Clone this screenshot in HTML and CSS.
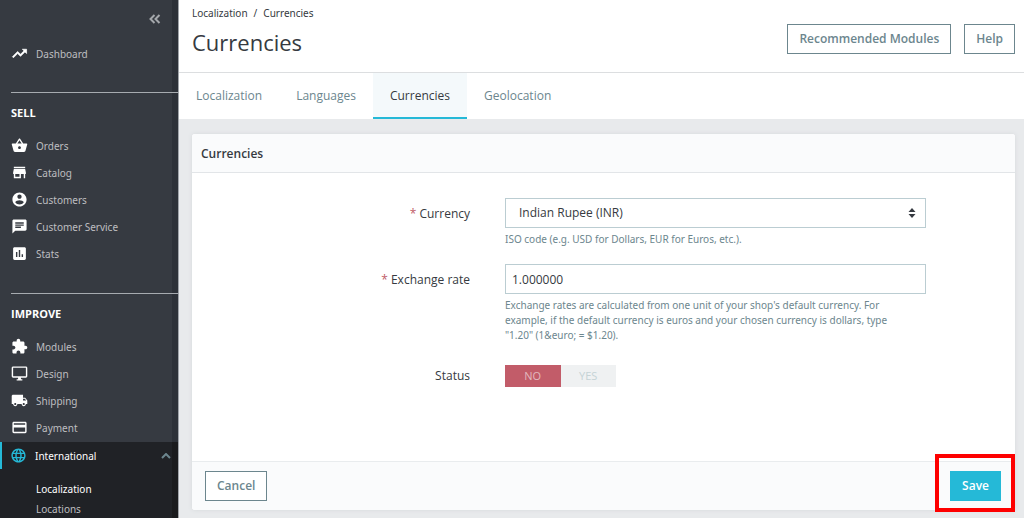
FILE: index.html
```html
<!DOCTYPE html>
<html lang="en">
<head>
<meta charset="utf-8">
<meta name="viewport" content="width=device-width, initial-scale=1">
<title>Currencies</title>
<link rel="stylesheet" href="styles.css">
</head>
<body>
<div class="app">
  <nav class="sidebar" aria-label="Main menu">
    <button class="collapse" type="button" aria-label="Collapse menu">
      <svg viewBox="0 0 12 10" width="12" height="10"><path d="M5.5 1 1.5 5l4 4M10.500 1l-4 4 4 4"/></svg>
    </button>
    <a class="item item-dashboard" href="#"><svg class="icon" viewBox="0 0 24 24"><path d="M16 6l2.290 2.290-4.880 4.880-4-4L2 16.590 3.410 18l6-6 4 4 6.300-6.290L22 12V6z" stroke="#fff"/></svg>Dashboard</a>

    <h2 class="section">Sell</h2>
    <ul class="menu">
      <li><a class="item" href="#"><svg class="icon" viewBox="0 0 24 24"><path d="M17.210 9l-4.380-6.560c-.19-.28-.51-.42-.83-.42-.32 0-.64.14-.83.430L6.790 9H2c-.55 0-1 .45-1 1 0 .09.010.18.040.270l2.540 9.270c.23.840 1 1.460 1.920 1.460h13c.92 0 1.690-.62 1.930-1.460l2.540-9.270L23 10c0-.55-.45-1-1-1h-4.790zM9 9l3-4.400L15 9H9zm3 8c-1.100 0-2-.9-2-2s.9-2 2-2 2 .9 2 2-.9 2-2 2z"/></svg>Orders</a></li>
      <li><a class="item" href="#"><svg class="icon" viewBox="0 0 24 24"><path d="M20 4H4v2h16V4zm1 10v-2l-1-5H4l-1 5v2h1v6h10v-6h4v6h2v-6h1zm-9 4H6v-4h6v4z"/></svg>Catalog</a></li>
      <li><a class="item" href="#"><svg class="icon" viewBox="0 0 24 24"><path d="M12 2C6.480 2 2 6.480 2 12s4.480 10 10 10 10-4.480 10-10S17.520 2 12 2zm0 3c1.660 0 3 1.340 3 3s-1.340 3-3 3-3-1.340-3-3 1.340-3 3-3zm0 14.200c-2.500 0-4.710-1.280-6-3.220.03-1.990 4-3.080 6-3.080 1.990 0 5.970 1.090 6 3.080-1.290 1.940-3.500 3.220-6 3.220z"/></svg>Customers</a></li>
      <li><a class="item" href="#"><svg class="icon" viewBox="0 0 24 24"><path d="M20 2H4c-1.100 0-1.990.9-1.990 2L2 22l4-4h14c1.100 0 2-.9 2-2V4c0-1.100-.9-2-2-2zM6 9h12v2H6V9zm8 5H6v-2h8v2zm4-6H6V6h12v2z"/></svg>Customer Service</a></li>
      <li><a class="item" href="#"><svg class="icon" viewBox="0 0 24 24"><path d="M19 3H5c-1.100 0-2 .9-2 2v14c0 1.100.9 2 2 2h14c1.100 0 2-.9 2-2V5c0-1.100-.9-2-2-2zM9 17H7v-7h2v7zm4 0h-2V7h2v10zm4 0h-2v-4h2v4z"/></svg>Stats</a></li>
    </ul>

    <h2 class="section">Improve</h2>
    <ul class="menu menu-last">
      <li><a class="item" href="#"><svg class="icon" viewBox="0 0 24 24"><path d="M20.500 11H19V7c0-1.100-.9-2-2-2h-4V3.500C13 2.120 11.880 1 10.500 1S8 2.120 8 3.500V5H4c-1.100 0-1.990.9-1.990 2v3.800H3.500c1.490 0 2.700 1.210 2.700 2.700s-1.210 2.700-2.700 2.700H2V20c0 1.100.9 2 2 2h3.800v-1.500c0-1.490 1.210-2.700 2.700-2.700 1.490 0 2.700 1.210 2.700 2.700V22H17c1.100 0 2-.9 2-2v-4h1.500c1.380 0 2.500-1.120 2.500-2.500S21.880 11 20.500 11z"/></svg>Modules</a></li>
      <li><a class="item" href="#"><svg class="icon" viewBox="0 0 24 24"><path d="M21 2H3c-1.100 0-2 .9-2 2v12c0 1.100.9 2 2 2h7v2H8v2h8v-2h-2v-2h7c1.100 0 2-.9 2-2V4c0-1.100-.9-2-2-2zm0 14H3V4h18v12z"/></svg>Design</a></li>
      <li><a class="item" href="#"><svg class="icon" viewBox="0 0 24 24"><path d="M20 8h-3V4H3c-1.100 0-2 .9-2 2v11h2c0 1.660 1.340 3 3 3s3-1.340 3-3h6c0 1.660 1.340 3 3 3s3-1.340 3-3h2v-5l-3-4zM6 18.500c-.83 0-1.500-.67-1.500-1.500s.67-1.500 1.500-1.500 1.500.67 1.500 1.500-.67 1.500-1.500 1.500zm13.500-9l1.960 2.500H17V9.500h2.500zm-1.500 9c-.83 0-1.500-.67-1.500-1.500s.67-1.500 1.500-1.500 1.500.67 1.500 1.500-.67 1.500-1.500 1.500z"/></svg>Shipping</a></li>
      <li><a class="item" href="#"><svg class="icon" viewBox="0 0 24 24"><path d="M20 4H4c-1.110 0-1.990.890-1.990 2L2 18c0 1.110.890 2 2 2h16c1.110 0 2-.89 2-2V6c0-1.110-.89-2-2-2zm0 14H4v-6h16v6zm0-10H4V6h16v2z"/></svg>Payment</a></li>
    </ul>
    <div class="open-group">
      <a class="item item-open" href="#" aria-expanded="true"><svg class="icon" viewBox="0 0 24 24"><path d="M11.990 2C6.470 2 2 6.480 2 12s4.470 10 9.990 10C17.520 22 22 17.520 22 12S17.520 2 11.990 2zm6.930 6h-2.950c-.32-1.250-.78-2.450-1.380-3.560 1.840.63 3.370 1.910 4.330 3.560zM12 4.040c.83 1.200 1.480 2.530 1.910 3.960h-3.820c.43-1.430 1.080-2.760 1.910-3.960zM4.260 14C4.100 13.360 4 12.690 4 12s.1-1.360.26-2h3.380c-.08.66-.14 1.320-.14 2s.06 1.340.14 2H4.260zm.82 2h2.950c.32 1.250.78 2.450 1.380 3.560-1.840-.63-3.370-1.900-4.330-3.560zm2.950-8H5.080c.96-1.660 2.490-2.930 4.330-3.560C8.810 5.550 8.350 6.750 8.030 8zM12 19.960c-.83-1.200-1.480-2.530-1.910-3.960h3.820c-.43 1.430-1.080 2.760-1.910 3.960zM14.340 14H9.660c-.09-.66-.16-1.320-.16-2s.07-1.350.16-2h4.680c.09.65.16 1.320.16 2s-.07 1.340-.16 2zm.25 5.560c.6-1.110 1.060-2.310 1.380-3.560h2.950c-.96 1.650-2.490 2.930-4.330 3.560zM16.360 14c.08-.66.14-1.320.14-2s-.06-1.340-.14-2h3.380c.16.64.26 1.310.26 2s-.1 1.360-.26 2h-3.380z"/></svg>International<svg class="chevron" viewBox="0 0 10 6" width="10" height="6"><path d="M1 5l4-4 4 4"/></svg></a>
      <ul class="submenu">
        <li><a class="current" href="#">Localization</a></li>
        <li><a href="#">Locations</a></li>
      </ul>
    </div>
  </nav>

  <main class="main">
    <header class="page-head">
      <div>
        <nav class="crumbs" aria-label="Breadcrumb"><a href="#">Localization</a><span>/</span><a href="#">Currencies</a></nav>
        <h1 class="title">Currencies</h1>
      </div>
      <div class="actions">
        <button class="btn" type="button">Recommended Modules</button>
        <button class="btn" type="button">Help</button>
      </div>
    </header>
    <nav class="tabs" aria-label="Localization pages">
      <a class="tab" href="#">Localization</a>
      <a class="tab" href="#">Languages</a>
      <a class="tab tab-active" href="#" aria-current="page">Currencies</a>
      <a class="tab" href="#">Geolocation</a>
    </nav>

    <form class="panel">
      <h2 class="panel-head">Currencies</h2>
      <div class="panel-body">
        <div class="row">
          <label class="label" for="currency"><span class="req">*</span> Currency</label>
          <div class="field">
            <div class="select-wrap">
              <select class="control select" id="currency"><option>Indian Rupee (INR)</option></select>
              <svg class="arrows" viewBox="0 0 8 10" width="8" height="10"><path d="M4 0l3.500 4h-7zM4 10L.5 6h7z"/></svg>
            </div>
            <p class="help">ISO code (e.g. USD for Dollars, EUR for Euros, etc.).</p>
          </div>
        </div>
        <div class="row">
          <label class="label" for="rate"><span class="req">*</span> Exchange rate</label>
          <div class="field">
            <input class="control" id="rate" type="text" value="1.000000">
            <p class="help">Exchange rates are calculated from one unit of your shop's default currency. For example, if the default currency is euros and your chosen currency is dollars, type "1.20" (1&amp;euro; = $1.20).</p>
          </div>
        </div>
        <div class="row row-status" role="radiogroup" aria-labelledby="status">
          <span class="label label-status" id="status">Status</span>
          <div class="switch">
            <input type="radio" name="status" id="status-no" checked><label class="no" for="status-no">NO</label>
            <input type="radio" name="status" id="status-yes"><label class="yes" for="status-yes">YES</label>
          </div>
        </div>
      </div>
      <footer class="panel-foot">
        <button class="btn" type="button">Cancel</button>
        <div class="save-wrap"><button class="btn btn-primary" type="submit">Save</button></div>
      </footer>
    </form>
  </main>
</div>
</body>
</html>
```

FILE: styles.css
```css
* { box-sizing: border-box; }
body {
  margin: 0;
  background: #e8eaec;
  color: #363a41;
  font: 12px/16px "Open Sans", "Noto Sans", sans-serif;
}
a { color: inherit; text-decoration: none; }
ul { margin: 0; padding: 0; list-style: none; }
h1, h2, p { margin: 0; }
button, input, select { font: inherit; color: inherit; }

.app { display: flex; min-height: 100vh; }

/* Sidebar */
.sidebar {
  position: sticky;
  top: 0;
  display: flex;
  flex-direction: column;
  flex: 0 0 179px;
  height: 100vh;
  overflow: hidden;
  background: linear-gradient(to left, #a0a4a9 1px, #2d3138 1px, #2d3138 7px, #363a41 7px);
  color: #bebec0;
}
.sidebar, .crumbs, .help { font-family: "Noto Sans", "Open Sans", sans-serif; font-size: 10px; }
.collapse {
  align-self: flex-end;
  display: flex;
  margin: 9px 18px 0 0;
  padding: 5px 0;
  border: 0;
  background: none;
}
.collapse path { fill: none; stroke: #a4a7ab; stroke-width: 2; }
.item {
  display: flex;
  align-items: center;
  flex-shrink: 0;
  gap: 8px;
  height: 27px;
  padding: 0 8px 0 11px;
}
.item-dashboard { margin-top: 11px; }
.icon { width: 17px; height: 17px; fill: #fff; }
.section {
  flex-shrink: 0;
  margin: 25px 0 0 11px;
  padding: 12px 0 11px;
  border-top: 1px solid #a7abb0;
  color: #fff;
  font-family: "Open Sans", "Noto Sans", sans-serif;
  font-size: 11px;
  line-height: 16px;
  text-transform: uppercase;
}
.menu { flex-shrink: 0; padding-bottom: 1px; }
.open-group {
  flex: 1 0 auto;
  background: linear-gradient(to left, #a0a4a9 1px, #1a1b1d 1px, #1a1b1d 7px, #202226 7px);
}
.item-open {
  padding-left: 8px;
  border-left: 2px solid #25b9d7;
  color: #fff;
}
.item-open .icon { fill: #25b9d7; }
.chevron { margin-left: auto; }
.chevron path { fill: none; stroke: #6c868e; stroke-width: 2; }
.submenu { padding: 10px 0 0 36px; line-height: 20px; }
.current { color: #fff; }

/* Page header */
.main { flex: 1; min-width: 0; }
.page-head {
  display: flex;
  justify-content: space-between;
  align-items: flex-start;
  padding: 5px 9px 14px 13px;
  border-bottom: 1px solid #dcdee0;
  background: #fff;
}
.crumbs { display: flex; gap: 6px; }
.title { margin-top: 6px; font-size: 22px; font-weight: 400; line-height: 31px; }
.actions { display: flex; gap: 13px; padding-top: 19px; }
.btn {
  height: 30px;
  padding: 0 11px;
  border: 1px solid #6c868e;
  background: #fff;
  color: #6c868e;
  font-weight: 600;
}
.tabs { display: flex; background: #fff; color: #6c868e; }
.tab { padding: 15px 17px 13px; border-bottom: 2px solid #fff; }
.tab-active { border-color: #25b9d7; background: #f4f9fb; color: #363a41; }

/* Form panel */
.panel {
  margin: 15px 9px 8px 13px;
  border-radius: 3px;
  background: #fff;
  box-shadow: 0 0 4px #d5d8db;
}
.panel-head {
  padding: 12px 9px 10px;
  border-bottom: 1px solid #e2e5e8;
  border-radius: 3px 3px 0 0;
  background: #fafbfc;
  font-size: 12px;
  font-weight: 600;
}
.panel-body { display: grid; gap: 17px; padding: 25px 0 74px; }
.row {
  display: grid;
  grid-template-columns: 278fr 421fr 54fr;
  column-gap: 35px;
}
.label { text-align: right; line-height: 32px; }
.req { color: #c05c67; }
.control {
  display: block;
  width: 100%;
  height: 30px;
  padding: 0 6px;
  border: 1px solid #bbcdd2;
  border-radius: 0;
  background: #fff;
}
.select-wrap { position: relative; }
.select { appearance: none; padding: 0 24px 0 13px; }
.arrows { position: absolute; top: 10px; right: 10px; pointer-events: none; fill: #363a41; }
.help { margin-top: 4px; padding-right: 16px; color: #6c868e; line-height: 15px; }
.row-status { margin-top: 5px; }
.label-status { line-height: 22px; }
.switch {
  display: grid;
  grid-template-columns: 1fr 1fr;
  justify-self: start;
  position: relative;
  width: 111px;
  font-size: 11px;
  line-height: 22px;
  text-align: center;
}
.switch input { position: absolute; opacity: 0; }
.no { background: #c25c69; color: #e3b9be; }
.yes { background: #eff1f2; color: #c5d3d6; }
.panel-foot {
  display: flex;
  justify-content: space-between;
  align-items: center;
  padding: 0 0 0 13px;
  border-top: 1px solid #e9ecee;
  border-radius: 0 0 3px 3px;
  background: #fafbfc;
}
/* Highlight frame round the save button */
.save-wrap {
  margin: -8px 0 -2px;
  padding: 13px 10px 7px 11px;
  border: 4px solid #fe0000;
}
.btn-primary { border-color: #25b9d7; background: #25b9d7; color: #fff; }
```
